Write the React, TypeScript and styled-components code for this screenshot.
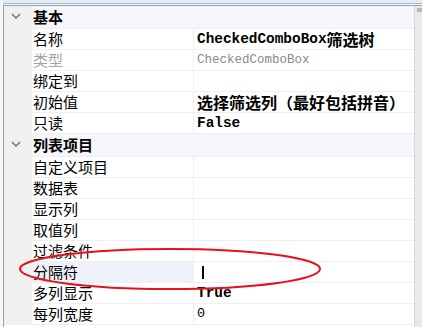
import styled, { createGlobalStyle } from "styled-components";

const GlobalStyle = createGlobalStyle`
  html, body {
    margin: 0;
    padding: 0;
    background: #f6f7fb;
  }
`;

const Window = styled.div`
  position: relative;
  width: 422px;
  height: 327px;
  overflow: hidden;
  background: #f6f7fb;
  font-family: "Noto Sans CJK SC", "Noto Sans", sans-serif;
  color: #000;
`;

const TopBand = styled.div`
  margin-left: 3px;
  height: 3px;
  background: #e6ebf8;
  border-bottom: 1px solid #a3b5d8;
  margin-bottom: 1px;
`;

const Body = styled.div`
  display: flex;
  margin-left: 3px;
  border-top: 1px solid #a0a0a0;
  border-left: 1px solid #a0a0a0;
  height: 330px;
`;

const Grid = styled.div`
  width: 411px;
  flex: none;
  box-sizing: border-box;
  border-right: 1px solid #d6d9de;
  background: #fff;
`;

const ScrollBar = styled.div`
  width: 17px;
  flex: none;
  background: #e9e9e9;
  padding-top: 2px;
  box-sizing: border-box;
`;

const ScrollArrow = styled.div`
  width: 5px;
  height: 4px;
  margin-left: 2px;
  background: #b5b5b5;
`;

const Row = styled.div<{ $category?: boolean }>`
  display: flex;
  height: ${(p) => (p.$category ? 23 : 21)}px;
`;

const Gutter = styled.div`
  width: 28px;
  flex: none;
  background: #f0f0f0;
  display: flex;
  align-items: center;
  padding-left: 7px;
  box-sizing: border-box;
`;

const CategoryCell = styled.div`
  flex: 1;
  background: #f4f6fa;
  border-bottom: 1px solid #eceff4;
  padding-left: 1px;
  font-size: 15px;
  font-weight: 700;
  line-height: 21px;
  white-space: nowrap;
`;

const LabelCell = styled.div<{ $disabled?: boolean; $selected?: boolean }>`
  width: 162px;
  flex: none;
  box-sizing: border-box;
  padding-left: 1px;
  border-right: 1px solid #eceff4;
  border-bottom: 1px solid #eceff4;
  background: ${(p) => (p.$selected ? "#eef2f8" : "#fff")};
  color: ${(p) => (p.$disabled ? "#a3a3a3" : "#000")};
  font-size: 15px;
  line-height: 20px;
  white-space: nowrap;
`;

const ValueCell = styled.div`
  flex: 1;
  box-sizing: border-box;
  padding-left: 3px;
  border-bottom: 1px solid #eceff4;
  display: flex;
  align-items: center;
  white-space: nowrap;
`;

const Mono = styled.span<{ $bold?: boolean; $gray?: boolean }>`
  font-family: "Liberation Mono", "DejaVu Sans Mono", monospace;
  font-size: ${(p) => (p.$bold ? "14.4px" : "12.5px")};
  font-weight: ${(p) => (p.$bold ? 700 : 400)};
  color: ${(p) => (p.$gray ? "#8a8a8a" : "#000")};
  line-height: 20px;
`;

const Han = styled.span`
  font-family: "Noto Sans CJK SC", sans-serif;
  font-size: 16px;
  font-weight: 700;
  line-height: 20px;
`;

const Plain = styled.span`
  font-family: "Liberation Mono", monospace;
  font-size: 13.5px;
  line-height: 20px;
`;

const Caret = styled.span`
  display: inline-block;
  width: 2px;
  height: 13px;
  margin-left: 5px;
  margin-top: 1px;
  background: #000;
`;

const Mark = styled.svg`
  position: absolute;
  left: 0;
  top: 0;
  pointer-events: none;
`;

const Chevron = () => (
  <svg width="10" height="6" viewBox="0 0 10 6" style={{ marginTop: -3 }}>
    <polyline points="1,1 5,5 9,1" fill="none" stroke="#6a6a6a" strokeWidth="1.3" />
  </svg>
);

type Item = {
  label: string;
  value?: React.ReactNode;
  disabled?: boolean;
  selected?: boolean;
};

const Category = ({ title }: { title: string }) => (
  <Row $category>
    <Gutter>
      <Chevron />
    </Gutter>
    <CategoryCell>{title}</CategoryCell>
  </Row>
);

const Property = ({ label, value, disabled, selected }: Item) => (
  <Row>
    <Gutter />
    <LabelCell $disabled={disabled} $selected={selected}>
      {label}
    </LabelCell>
    <ValueCell>{value}</ValueCell>
  </Row>
);

const basic: Item[] = [
  {
    label: "名称",
    value: (
      <>
        <Mono $bold>CheckedComboBox</Mono>
        <Han>筛选树</Han>
      </>
    ),
  },
  { label: "类型", disabled: true, value: <Mono $gray>CheckedComboBox</Mono> },
  { label: "绑定到" },
  { label: "初始值", value: <Han>选择筛选列（最好包括拼音）</Han> },
  { label: "只读", value: <Mono $bold>False</Mono> },
];

const listItems: Item[] = [
  { label: "自定义项目" },
  { label: "数据表" },
  { label: "显示列" },
  { label: "取值列" },
  { label: "过滤条件" },
  { label: "分隔符", selected: true, value: <Caret /> },
  { label: "多列显示", value: <Mono $bold>True</Mono> },
  { label: "每列宽度", value: <Plain>0</Plain> },
];

export default function App() {
  return (
    <Window>
      <GlobalStyle />
      <TopBand />
      <Body>
        <Grid>
          <Category title="基本" />
          {basic.map((it) => (
            <Property key={it.label} {...it} />
          ))}
          <Category title="列表项目" />
          {listItems.map((it) => (
            <Property key={it.label} {...it} />
          ))}
        </Grid>
        <ScrollBar>
          <ScrollArrow />
        </ScrollBar>
      </Body>
      <Mark width="422" height="327" viewBox="0 0 422 327">
        <ellipse cx="170" cy="269" rx="150" ry="20" fill="none" stroke="#e8101a" strokeWidth="2" />
      </Mark>
    </Window>
  );
}
